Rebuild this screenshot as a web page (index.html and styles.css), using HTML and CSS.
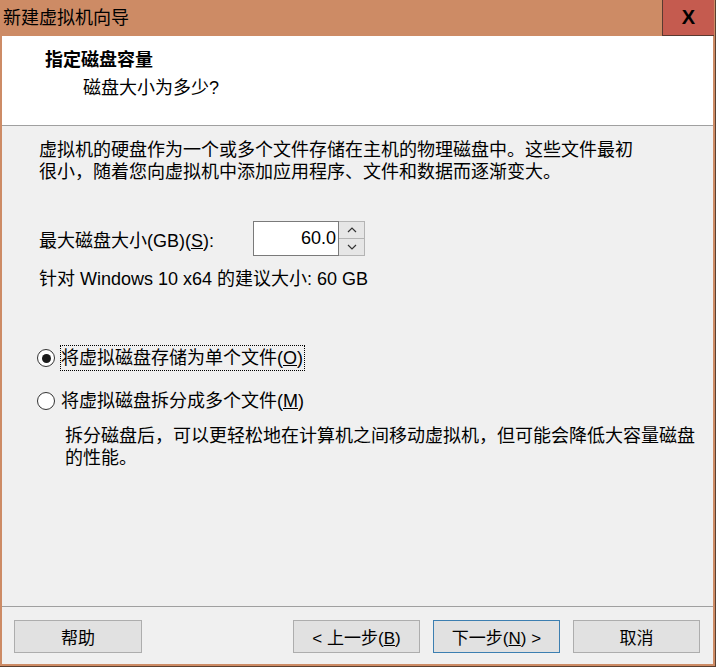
FILE: index.html
```html
<!DOCTYPE html>
<html lang="zh-CN">
<head>
  <meta charset="UTF-8" />
  <title>新建虚拟机向导</title>
  <link rel="stylesheet" href="styles.css">
</head>
<body>
  <div class="window">
    <div class="titlebar">
      <div class="title">新建虚拟机向导</div>
      <div class="close">X</div>
    </div>

    <div class="client">
      <div class="header">
        <div class="header-title">指定磁盘容量</div>
        <div class="header-sub">磁盘大小为多少?</div>
      </div>

      <div class="content">
        <p class="intro">虚拟机的硬盘作为一个或多个文件存储在主机的物理磁盘中。这些文件最初<br>很小，随着您向虚拟机中添加应用程序、文件和数据而逐渐变大。</p>

        <div class="size-row">
          <div class="size-label">最大磁盘大小(GB)(<u>S</u>):</div>
          <div class="spin">
            <div class="spin-input">60.0</div>
            <div class="spin-buttons">
              <div class="spin-btn">
                <svg width="10" height="6" viewBox="0 0 10 6"><polyline points="1,5 5,1 9,5" fill="none" stroke="#333" stroke-width="1.2"/></svg>
              </div>
              <div class="spin-btn">
                <svg width="10" height="6" viewBox="0 0 10 6"><polyline points="1,1 5,5 9,1" fill="none" stroke="#333" stroke-width="1.2"/></svg>
              </div>
            </div>
          </div>
        </div>

        <div class="hint">针对 Windows 10 x64 的建议大小: 60 GB</div>

        <div class="options">
          <div class="radio-row">
            <span class="radio checked"></span>
            <span class="radio-label focused">将虚拟磁盘存储为单个文件(<u>O</u>)</span>
          </div>
          <div class="radio-row">
            <span class="radio"></span>
            <span class="radio-label">将虚拟磁盘拆分成多个文件(<u>M</u>)</span>
          </div>
          <p class="radio-desc">拆分磁盘后，可以更轻松地在计算机之间移动虚拟机，但可能会降低大容量磁盘<br>的性能。</p>
        </div>
      </div>

      <div class="footer">
        <button class="btn help">帮助</button>
        <div class="footer-right">
          <button class="btn">&lt; 上一步(<u>B</u>)</button>
          <button class="btn default">下一步(<u>N</u>) &gt;</button>
          <button class="btn">取消</button>
        </div>
      </div>
    </div>
  </div>
</body>
</html>
```

FILE: styles.css
```css
body {
  margin: 0;
  background: #5a4030;
  font-family: "Liberation Sans", "Noto Sans CJK SC", sans-serif;
  font-size: 18px;
  color: #000;
}
.window {
  width: 715px;
  height: 666px;
  background: #cd8b65;
  display: flex;
  flex-direction: column;
}
.titlebar {
  height: 36px;
  display: flex;
  align-items: stretch;
}
.title {
  flex: 1;
  padding-left: 3px;
  line-height: 36px;
  font-size: 18px;
}
.close {
  width: 51px;
  margin-right: 1px;
  background: #c55b4f;
  border-left: 1px solid #5a3a30;
  border-bottom: 1px solid #5a3a30;
  display: flex;
  align-items: center;
  justify-content: center;
  font-weight: bold;
  font-size: 20px;
}
.client {
  flex: 1;
  margin: 0 2px 2px 2px;
  background: #f0f0f0;
  display: flex;
  flex-direction: column;
}
.header {
  height: 90px;
  box-sizing: border-box;
  background: #fff;
  border-bottom: 1px solid #a0a0a0;
  padding: 12px 0 0 43px;
}
.header-title {
  font-weight: bold;
  line-height: 24px;
}
.header-sub {
  margin: 4px 0 0 38px;
  line-height: 24px;
}
.content {
  flex: 1;
  padding: 13px 0 0 37px;
}
.intro {
  margin: 0;
  line-height: 22px;
}
.size-row {
  margin-top: 38px;
  display: flex;
  align-items: center;
}
.size-label {
  width: 214px;
}
.spin {
  display: flex;
  height: 35px;
}
.spin-input {
  width: 86px;
  border: 1px solid #7a7a7a;
  background: #fff;
  text-align: right;
  padding-right: 2px;
  box-sizing: border-box;
  line-height: 33px;
}
.spin-buttons {
  width: 26px;
  display: flex;
  flex-direction: column;
  border: 1px solid #b4b4b4;
  border-left: none;
  box-sizing: border-box;
}
.spin-btn {
  flex: 1;
  background: #e6e6e6;
  display: flex;
  align-items: center;
  justify-content: center;
}
.spin-btn + .spin-btn {
  border-top: 1px solid #b4b4b4;
}
.hint {
  margin-top: 12px;
  line-height: 22px;
}
.options {
  margin: 55px 0 0 -2px;
}
.radio-row {
  display: flex;
  align-items: center;
  height: 26px;
}
.radio-row + .radio-row {
  margin-top: 17px;
}
.radio {
  width: 18px;
  height: 18px;
  box-sizing: border-box;
  border: 1px solid #333;
  border-radius: 50%;
  background: #fff;
  margin-right: 5px;
  display: flex;
  align-items: center;
  justify-content: center;
}
.radio.checked::after {
  content: "";
  width: 9px;
  height: 9px;
  border-radius: 50%;
  background: #1a1a1a;
}
.radio-label {
  border: 1px dotted transparent;
  padding: 0 1px 0 0;
  line-height: 24px;
}
.radio-label.focused {
  border-color: #000;
}
.radio-desc {
  margin: 11px 0 0 28px;
  line-height: 22px;
}
.footer {
  height: 58px;
  box-sizing: border-box;
  border-top: 1px solid #a0a0a0;
  padding: 13px 13px 0 12px;
  display: flex;
  justify-content: space-between;
  align-items: flex-start;
}
.footer-right {
  display: flex;
  gap: 13px;
}
.btn {
  width: 127px;
  height: 33px;
  background: #e1e1e1;
  border: 1px solid #adadad;
  font-family: "Liberation Sans", "Noto Sans CJK SC", sans-serif;
  font-size: 17px;
  color: #000;
  padding: 0;
}
.btn.help {
  width: 128px;
}
.btn.default {
  border-color: #3c7fb1;
}
```
